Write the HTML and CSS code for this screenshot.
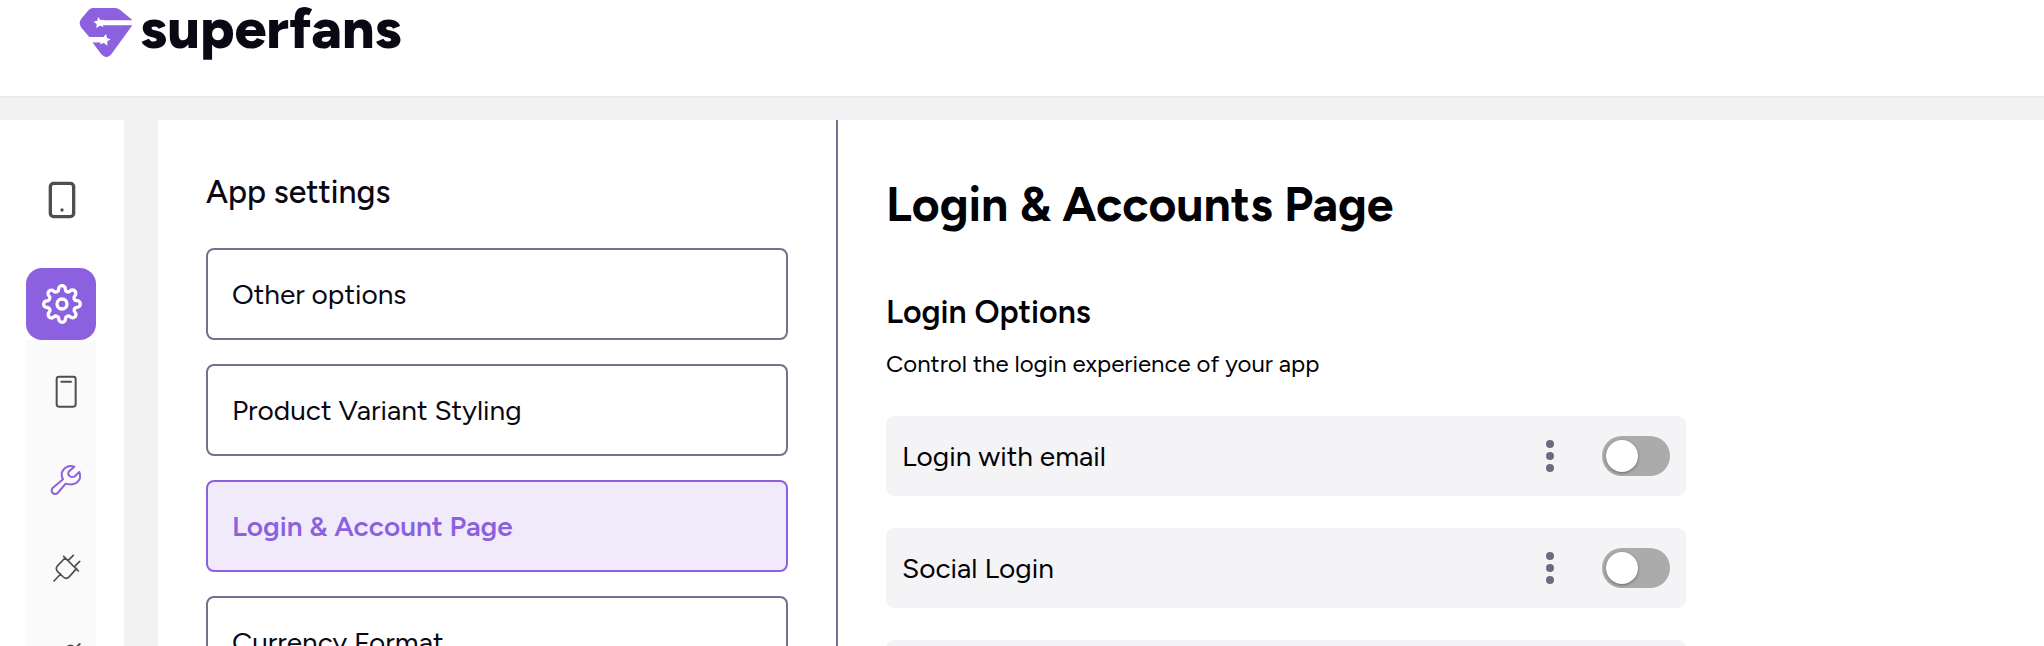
FILE: index.html
```html
<!DOCTYPE html>
<html lang="en">
<head>
<meta charset="utf-8">
<meta name="viewport" content="width=device-width, initial-scale=1">
<title>Superfans – App settings</title>
<link rel="stylesheet" href="styles.css">
</head>
<body>
<header class="topbar">
  <a class="brand" href="#">
    <svg class="brand-mark" viewBox="57 20 162 153" aria-hidden="true">
      <path fill="#8b61e0" d="M98 23H165Q173 23 180 28L216 58V76L155 160Q140 180 124 162L97 126H134V110H88L64 82Q54 68 64 55L84 31Q90 23 98 23Z"/>
      <path fill="#fff" d="M120 60H219V75H120ZM80 111H134V126H80Z"/>
      <path fill="#fff" d="M114 49L121 59L133 58L126 68L131 79L119 76L109 84L110 71L100 64L112 61ZM138 101L141 113L152 117L142 123L142 136L132 128L120 132L124 120L118 110L130 111Z"/>
    </svg>
    <span class="brand-name">superfans</span>
  </a>
</header>
<div class="shell">
  <nav class="rail" aria-label="Main">
    <a class="rail-link" href="#" aria-label="App">
      <svg class="icon-lg" viewBox="0 0 24 24"><rect x="5" y="2" width="14" height="20" rx="2"/><path d="M12 18h.01"/></svg>
    </a>
    <a class="rail-link rail-link-active" href="#" aria-label="Settings">
      <svg class="icon-lg" viewBox="0 0 24 24"><circle cx="12" cy="12" r="3"/><path d="M19.4 15a1.65 1.65 0 0 0 .33 1.82l.06.06a2 2 0 0 1 0 2.83 2 2 0 0 1-2.83 0l-.06-.06a1.65 1.65 0 0 0-1.82-.33 1.65 1.65 0 0 0-1 1.51V21a2 2 0 0 1-2 2 2 2 0 0 1-2-2v-.09A1.65 1.65 0 0 0 9 19.4a1.65 1.65 0 0 0-1.82.33l-.06.06a2 2 0 0 1-2.83 0 2 2 0 0 1 0-2.83l.06-.06a1.65 1.65 0 0 0 .33-1.82 1.65 1.65 0 0 0-1.51-1H3a2 2 0 0 1-2-2 2 2 0 0 1 2-2h.09A1.65 1.65 0 0 0 4.6 9a1.65 1.65 0 0 0-.33-1.82l-.06-.06a2 2 0 0 1 0-2.83 2 2 0 0 1 2.83 0l.06.06a1.65 1.65 0 0 0 1.82.33H9a1.65 1.65 0 0 0 1-1.51V3a2 2 0 0 1 2-2 2 2 0 0 1 2 2v.09a1.65 1.65 0 0 0 1 1.51 1.65 1.65 0 0 0 1.82-.33l.06-.06a2 2 0 0 1 2.83 0 2 2 0 0 1 0 2.83l-.06.06a1.65 1.65 0 0 0-.33 1.82V9a1.65 1.65 0 0 0 1.51 1H21a2 2 0 0 1 2 2 2 2 0 0 1-2 2h-.09a1.65 1.65 0 0 0-1.51 1z"/></svg>
    </a>
    <div class="subrail">
      <a class="subrail-link" href="#" aria-label="Screens">
        <svg class="icon" viewBox="0 0 108 108"><g stroke-width="6"><rect x="26" y="8" width="57" height="90" rx="7"/><path d="M40 23H69"/></g></svg>
      </a>
      <a class="subrail-link subrail-link-active" href="#" aria-label="Tools">
        <svg class="icon" viewBox="0 0 108 108"><path stroke-width="6" d="M45 52L14 78a10 10 0 0 0 15 15L53 65C72 71 91 65 96 47Q97 37 94 30L79 44Q69 47 63 41Q59 35 62 29L79 14C62 8 46 17 41 33Q40 43 45 52Z"/></svg>
      </a>
      <a class="subrail-link" href="#" aria-label="Integrations">
        <svg class="icon" viewBox="0 0 108 108"><path stroke-width="5" d="M18 93L38 72M51 24L29 47Q21 55 29 65L46 81Q55 89 64 80L86 55M47 19L91 63M60 32L76 16M80 49L95 34"/></svg>
      </a>
      <a class="subrail-link" href="#" aria-label="Connections">
        <svg class="icon" viewBox="0 0 108 108"><path stroke-width="6" d="M95 18L82 31M38 48L58 26Q68 18 78 27L86 35Q93 44 85 52L64 74ZM38 74L18 95"/></svg>
      </a>
    </div>
  </nav>
  <div class="workspace">
    <aside class="settings">
      <h2 class="settings-title">App settings</h2>
      <nav class="settings-list" aria-label="App settings">
        <a class="settings-item" href="#">Other options</a>
        <a class="settings-item" href="#">Product Variant Styling</a>
        <a class="settings-item settings-item-active" href="#" aria-current="page">Login &amp; Account Page</a>
        <a class="settings-item" href="#">Currency Format</a>
      </nav>
    </aside>
    <main class="content">
      <h1 class="page-title">Login &amp; Accounts Page</h1>
      <h2 class="section-title">Login Options</h2>
      <p class="section-text">Control the login experience of your app</p>
      <div class="options">
        <div class="option">
          <label class="option-label" for="email-login">Login with email</label>
          <button class="more" type="button" aria-label="More"><svg class="dots" viewBox="0 0 8 32"><circle cx="4" cy="4" r="4"/><circle cx="4" cy="16" r="4"/><circle cx="4" cy="28" r="4"/></svg></button>
          <input class="switch" type="checkbox" role="switch" id="email-login">
        </div>
        <div class="option">
          <label class="option-label" for="social-login">Social Login</label>
          <button class="more" type="button" aria-label="More"><svg class="dots" viewBox="0 0 8 32"><circle cx="4" cy="4" r="4"/><circle cx="4" cy="16" r="4"/><circle cx="4" cy="28" r="4"/></svg></button>
          <input class="switch" type="checkbox" role="switch" id="social-login">
        </div>
        <div class="option"></div>
      </div>
    </main>
  </div>
</div>
</body>
</html>
```
FILE: styles.css
```css
* { box-sizing: border-box; }

body {
  margin: 0;
  height: 100vh;
  display: flex;
  flex-direction: column;
  overflow: hidden;
  background: #f2f2f2;
  color: #0a0812;
  font-family: Figtree, Lato, sans-serif;
  font-size: 28px;
  line-height: 32px;
}

h1, h2, p { margin: 0; }
a { color: inherit; text-decoration: none; }

.topbar {
  flex: none;
  display: flex;
  padding: 0 79px 36px;
  background: #fff;
  border-bottom: 2px solid #ebebeb;
  margin-bottom: 22px;
}

.brand {
  display: flex;
  align-items: center;
  gap: 7px;
  height: 60px;
}

.brand-mark { width: 54px; height: 51px; margin-top: 4px; }

.brand-name {
  padding-bottom: 4px;
  font-size: 57px;
  line-height: 56px;
  font-weight: 800;
}

.shell {
  flex: 1;
  min-height: 0;
  display: flex;
  gap: 34px;
}

.rail {
  flex: none;
  width: 124px;
  padding: 44px 28px 0 26px;
  background: #fff;
  display: flex;
  flex-direction: column;
}

.rail svg {
  fill: none;
  stroke: currentColor;
  stroke-linecap: round;
  stroke-linejoin: round;
}

.rail-link {
  flex: none;
  display: flex;
  align-items: center;
  justify-content: center;
  height: 72px;
  padding-left: 2px;
  margin-bottom: 32px;
  border-radius: 16px;
  color: #4f4f4f;
}

.rail-link-active {
  margin-bottom: 0;
  background: #8b61e0;
  color: #fff;
}

.icon-lg { width: 40px; height: 40px; stroke-width: 2; }

.subrail {
  flex: none;
  padding: 8px 0 0 10px;
  background: #fafafa;
}

.subrail-link {
  display: flex;
  align-items: center;
  justify-content: center;
  height: 88px;
  color: #4f4f4f;
}

.subrail-link-active { color: #8b61e0; }
.icon { width: 36px; height: 36px; }

.workspace {
  flex: 1;
  min-width: 0;
  display: flex;
  background: #fff;
}

.settings {
  flex: none;
  width: 680px;
  padding: 52px 48px 0;
  border-right: 2px solid #75708f;
}

.settings-title {
  font-size: 32px;
  line-height: 40px;
  font-weight: 500;
}

.settings-list {
  display: flex;
  flex-direction: column;
  gap: 24px;
  margin-top: 36px;
}

.settings-item {
  padding: 28px 24px;
  border: 2px solid #75708f;
  border-radius: 8px;
}

.settings-item-active {
  border-color: #8b61e0;
  background: #f1eafb;
  color: #8b61e0;
  font-weight: 600;
}

.content {
  flex: 1;
  min-width: 0;
  padding: 56px 48px 0;
  color: #020105;
}

.page-title {
  font-size: 48px;
  line-height: 56px;
  font-weight: 700;
}

.section-title {
  margin-top: 60px;
  font-size: 32px;
  line-height: 40px;
  font-weight: 600;
}

.section-text {
  margin-top: 16px;
  font-size: 24px;
  line-height: 32px;
}

.options {
  display: flex;
  flex-direction: column;
  gap: 32px;
  max-width: 800px;
  margin-top: 36px;
}

.option {
  display: flex;
  align-items: center;
  min-height: 80px;
  padding: 0 16px;
  border-radius: 8px;
  background: #f4f4f7;
}

.option-label { flex: 1; }

.more {
  display: flex;
  padding: 8px;
  margin-right: 40px;
  border: 0;
  background: none;
}

.dots { width: 8px; height: 32px; fill: #6d6980; }

.switch {
  appearance: none;
  width: 68px;
  height: 40px;
  margin: 0;
  padding: 4px;
  border-radius: 20px;
  background: #ababab;
}

.switch::before {
  content: "";
  display: block;
  width: 32px;
  height: 32px;
  border-radius: 50%;
  background: #fff;
  box-shadow: 0 1px 3px rgba(0, 0, 0, 0.4);
}
```
